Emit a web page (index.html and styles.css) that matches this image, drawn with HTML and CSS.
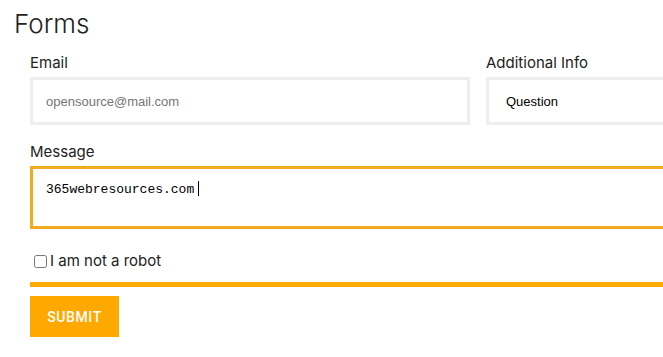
FILE: index.html
```html
<!DOCTYPE html>
<html lang="en">

<head>
    <meta charset="UTF-8">
    <meta name="viewport" content="width=device-width, initial-scale=1.0">
    <title>Forms</title>
    <link rel="stylesheet" href="styles.css">
</head>

<body>
    <h1 class="title">Forms</h1>
    <form class="form">
        <div class="row">
            <div class="field field-email">
                <label for="email">Email</label>
                <input type="email" id="email" class="input" placeholder="opensource@mail.com">
            </div>
            <div class="field field-info">
                <label for="info">Additional Info</label>
                <select id="info" class="input select">
                    <option>Question</option>
                </select>
            </div>
        </div>
        <div class="field field-message">
            <label for="message">Message</label>
            <div class="message-wrap">
                <textarea id="message" class="input textarea">365webresources.com</textarea>
                <span class="caret"></span>
            </div>
        </div>
        <label class="check"><input type="checkbox" id="robot">I am not a robot</label>
        <div class="divider"></div>
        <button type="submit" class="submit">Submit</button>
    </form>
</body>

</html>
```

FILE: styles.css
```css
* {
    margin: 0;
    padding: 0;
    box-sizing: border-box;
}

body {
    background: #fff;
    color: #222;
    font-family: Inter, 'Open Sans', sans-serif;
    overflow: hidden;
    width: 720px;
}

.title {
    font-size: 26px;
    font-weight: 300;
    line-height: 32px;
    padding: 8px 0 0 14px;
    color: #222;
}

.form {
    padding: 14px 0 0 30px;
}

.row {
    display: flex;
    gap: 16px;
}

.field label {
    display: block;
    font-size: 15px;
    line-height: 18px;
    margin-bottom: 5px;
    color: #222;
}

.field-email {
    width: 440px;
}

.field-info {
    flex: 1;
}

.input {
    display: block;
    width: 100%;
    height: 48px;
    border: 3px solid #eeeeee;
    background: #fff;
    padding: 0 13px;
    font-family: 'Liberation Sans', Arial, sans-serif;
    font-size: 13px;
    color: #000;
    outline: none;
}

.input::placeholder {
    color: #757575;
}

.select {
    padding-left: 17px;
    appearance: none;
    border-radius: 0;
}

.field-message {
    margin-top: 18px;
}

.message-wrap {
    position: relative;
}

.textarea {
    height: 63px;
    border-color: #f0ab1e;
    padding: 13px 13px;
    font-family: 'Liberation Mono', 'Courier New', monospace;
    font-size: 13px;
    resize: none;
}

.caret {
    position: absolute;
    left: 168px;
    top: 15px;
    width: 1px;
    height: 15px;
    background: #000;
}

.check {
    display: flex;
    align-items: center;
    margin-top: 23px;
    font-size: 15px;
    line-height: 18px;
    color: #222;
}

.check input {
    width: 13px;
    height: 13px;
    margin: 0 3px 0 4px;
}

.divider {
    height: 5px;
    background: #ffab00;
    margin-top: 12px;
}

.submit {
    margin-top: 9px;
    width: 89px;
    height: 41px;
    border: none;
    background: #ffa800;
    color: #fff;
    font-family: Roboto, 'Liberation Sans', Arial, sans-serif;
    font-size: 14px;
    font-weight: 500;
    letter-spacing: 0.6px;
    text-transform: uppercase;
}
```
